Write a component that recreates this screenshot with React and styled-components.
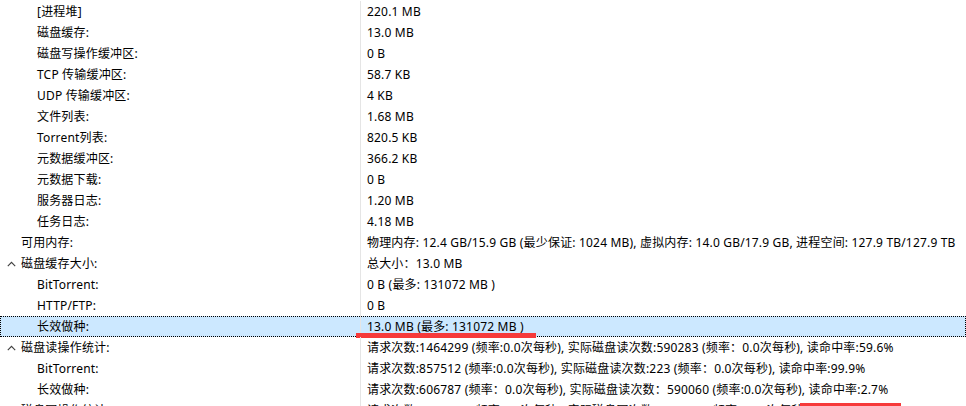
import styled, { createGlobalStyle } from "styled-components";

const GlobalStyle = createGlobalStyle`
  html, body {
    margin: 0;
    padding: 0;
    background: #fff;
  }
  body {
    font-family: "Noto Sans", "Noto Sans CJK SC", sans-serif;
    font-size: 12px;
    letter-spacing: 0.18px;
    color: #000;
  }
`;

const rows = [
  { level: 2, label: "[进程堆]", value: "220.1 MB" },
  { level: 2, label: "磁盘缓存:", value: "13.0 MB" },
  { level: 2, label: "磁盘写操作缓冲区:", value: "0 B" },
  { level: 2, label: "TCP 传输缓冲区:", value: "58.7 KB" },
  { level: 2, label: "UDP 传输缓冲区:", value: "4 KB" },
  { level: 2, label: "文件列表:", value: "1.68 MB" },
  { level: 2, label: "Torrent列表:", value: "820.5 KB" },
  { level: 2, label: "元数据缓冲区:", value: "366.2 KB" },
  { level: 2, label: "元数据下载:", value: "0 B" },
  { level: 2, label: "服务器日志:", value: "1.20 MB" },
  { level: 2, label: "任务日志:", value: "4.18 MB" },
  {
    level: 1,
    label: "可用内存:",
    value:
      "物理内存: 12.4 GB/15.9 GB (最少保证: 1024 MB), 虚拟内存: 14.0 GB/17.9 GB, 进程空间: 127.9 TB/127.9 TB",
  },
  { level: 1, open: true, label: "磁盘缓存大小:", value: "总大小：13.0 MB" },
  { level: 2, label: "BitTorrent:", value: "0 B (最多: 131072 MB )" },
  { level: 2, label: "HTTP/FTP:", value: "0 B" },
  { level: 2, label: "长效做种:", value: "13.0 MB (最多: 131072 MB )", selected: true },
  {
    level: 1,
    open: true,
    label: "磁盘读操作统计:",
    value:
      "请求次数:1464299 (频率:0.0次每秒), 实际磁盘读次数:590283 (频率：0.0次每秒), 读命中率:59.6%",
  },
  {
    level: 2,
    label: "BitTorrent:",
    value:
      "请求次数:857512 (频率:0.0次每秒), 实际磁盘读次数:223 (频率：0.0次每秒), 读命中率:99.9%",
  },
  {
    level: 2,
    label: "长效做种:",
    value:
      "请求次数:606787 (频率：0.0次每秒), 实际磁盘读次数：590060 (频率:0.0次每秒), 读命中率:2.7%",
  },
  {
    level: 1,
    open: true,
    label: "磁盘写操作统计:",
    value:
      "请求次数:1003641 (频率:0.0次每秒), 实际磁盘写次数:1003641 (频率：0.0次每秒), 写命中率:0.0%",
  },
];

const Chevron = () => (
  <svg width="10" height="6" viewBox="0 0 10 6">
    <polyline points="0.8,5.2 4.5,1.3 8.2,5.2" fill="none" stroke="#404040" strokeWidth="1.1" />
  </svg>
);

const App = () => {
  return (
    <>
      <GlobalStyle />
      <Page>
        {rows.map((row, i) => (
          <Row key={i} $selected={row.selected}>
            <LabelCell $level={row.level}>
              <Expander>{row.open && <Chevron />}</Expander>
              {row.label}
            </LabelCell>
            <ValueCell>{row.value}</ValueCell>
            {row.selected && <Mark />}
          </Row>
        ))}
        <CornerMark />
      </Page>
    </>
  );
};

const Page = styled.div`
  position: relative;
  width: 966px;
  height: 406px;
  padding-top: 1px;
  box-sizing: border-box;
  overflow: hidden;
  background: #fff;
`;

const Row = styled.div`
  position: relative;
  display: grid;
  grid-template-columns: 361px 1fr;
  height: 21px;
  line-height: 21px;
  background: ${(p) => (p.$selected ? "#cce8ff" : "transparent")};
  outline: ${(p) => (p.$selected ? "1px dotted #000" : "none")};
  outline-offset: -1px;
`;

const LabelCell = styled.div`
  display: flex;
  align-items: center;
  padding-left: ${(p) => 7 + (p.$level - 1) * 16}px;
  border-right: 1px solid #e5e5e5;
  white-space: nowrap;
  overflow: hidden;
`;

const Expander = styled.span`
  display: inline-flex;
  align-items: center;
  width: 14px;
  height: 21px;
  flex: none;
`;

const ValueCell = styled.div`
  padding-left: 6px;
  white-space: nowrap;
  overflow: hidden;
`;

const Mark = styled.span`
  position: absolute;
  left: 356px;
  top: 17px;
  width: 180px;
  height: 5px;
  background: #f63a3a;
`;

const CornerMark = styled.span`
  position: absolute;
  left: 800px;
  top: 403px;
  width: 101px;
  height: 6px;
  background: #f63a3a;
`;

export default App;
